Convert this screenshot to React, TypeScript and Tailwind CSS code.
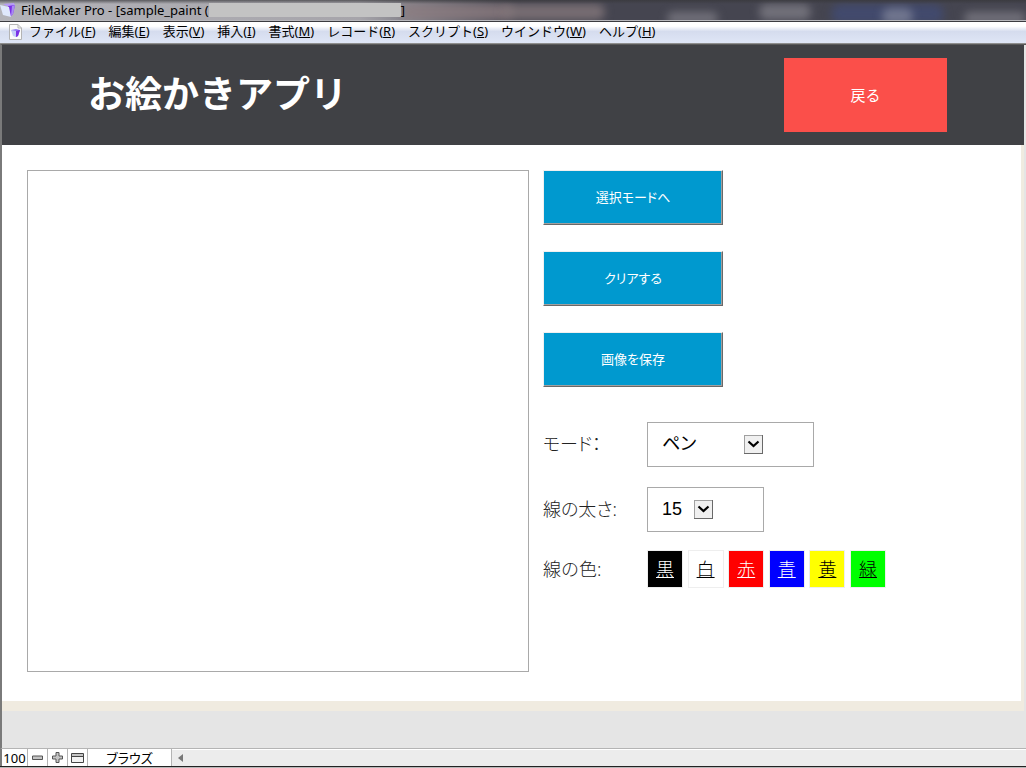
import React from "react";

interface menuType {
  name: string;
  shortcut: string;
}

interface swatchType {
  name: string;
  style: string;
}

const FileMakerIcon = ({ className }: { className: string }) => (
  <svg viewBox="0 0 16 16" className={className} aria-hidden="true">
    <path d="M3 2 L14 1 L15 4 L9 5 Z" fill="#b79cf6" />
    <path d="M8 4 L15 3 L13 12 L10 15 Z" fill="#7a2fe6" />
    <path d="M12 4 L15 3 L13 12 L11 14 Z" fill="#a98af4" />
    <path d="M0 3 L9 5 L11 15 L3 13 Z" fill="#dfe8fc" />
  </svg>
);

const FileIcon = () => (
  <svg viewBox="0 0 13 16" className="h-4 w-[13px]" aria-hidden="true">
    <path d="M0.5 0.5 H9 L12.5 4 V15.5 H0.5 Z" fill="#fafafa" stroke="#b4b4b4" />
    <path d="M9 0.5 V4 H12.5" fill="none" stroke="#b4b4b4" />
    <path d="M2 6 L7 5 L11 6 L9 12 L7 13 Z" fill="#8f7cf2" />
    <path d="M7 7 L11 6 L9 12 L7 13 Z" fill="#7a2fe6" />
    <path d="M2 6 L7 7 V13 L4 12 Z" fill="#c3cdf8" />
  </svg>
);

const TitleBar = () => (
  <div className="relative flex h-[22px] items-start overflow-hidden border-b border-[#3c3c40] bg-linear-to-r from-[#b3b3b9] via-[#a6a4aa] via-35% to-[#454550] to-50% pt-[2px]">
    <div className="absolute top-1 left-[39%] h-4 w-[11%] rounded-full bg-[#8c7c80]/80 blur-[4px]" />
    <div className="absolute top-1 left-[49%] h-4 w-[10%] rounded-full bg-[#85787c]/80 blur-[4px]" />
    <div className="absolute top-3 left-[65%] h-3 w-[5%] rounded-full bg-[#85838c]/70 blur-[4px]" />
    <div className="absolute top-1 left-[74%] h-4 w-[5%] rounded-full bg-[#85838c]/70 blur-[4px]" />
    <div className="absolute top-1 left-[81%] h-5 w-[11%] rounded-full bg-[#414b74]/80 blur-[4px]" />
    <div className="absolute top-2 left-[86%] h-4 w-[3%] rounded-full bg-[#85899c]/70 blur-[4px]" />
    <div className="absolute top-3 left-[94%] h-3 w-[6%] rounded-full bg-[#85838c]/70 blur-[4px]" />
    <div className="absolute inset-x-0 top-0 h-1 bg-linear-to-b from-[#37373a]/70 to-transparent" />
    <div className="absolute inset-x-0 bottom-0 h-px bg-[#b8b8bc]" />
    <div className="relative flex items-center text-[13px] leading-4 text-black">
      <FileMakerIcon className="mr-[5px] h-4 w-4" />
      <span className="whitespace-pre">FileMaker Pro - [sample_paint (</span>
      <span className="h-[14px] w-[192px] bg-[#c3c3c3]" />
      <span>]</span>
    </div>
  </div>
);

const MenuBar = () => {
  const menus: menuType[] = [
    { name: "ファイル", shortcut: "F" },
    { name: "編集", shortcut: "E" },
    { name: "表示", shortcut: "V" },
    { name: "挿入", shortcut: "I" },
    { name: "書式", shortcut: "M" },
    { name: "レコード", shortcut: "R" },
    { name: "スクリプト", shortcut: "S" },
    { name: "ウインドウ", shortcut: "W" },
    { name: "ヘルプ", shortcut: "H" },
  ];
  return (
    <nav className="flex h-[22px] items-center gap-[13px] border-b border-[#8e8e8e] bg-linear-to-b from-white from-20% via-[#d5dcee] via-45% to-[#dfe6f6] pb-[3px] pl-[9px]">
      <div className="-mr-[6px] pt-[2px]">
        <FileIcon />
      </div>
      {menus.map((menu) => (
        <button
          key={menu.name}
          type="button"
          className="text-[13px] leading-4 whitespace-nowrap text-black"
        >
          {menu.name}(<u>{menu.shortcut}</u>)
        </button>
      ))}
    </nav>
  );
};

const ActionButton = ({ name }: { name: string }) => (
  <button
    type="button"
    className="h-[55px] w-[180px] border border-t-[#f0f0f0] border-r-[#696969] border-b-[#696969] border-l-[#f0f0f0] bg-[#0099cf] pt-px text-[13px] text-white shadow-[inset_-1px_-1px_0_#a0a0a0] [font-feature-settings:'palt']"
  >
    {name}
  </button>
);

interface selectProps {
  id: string;
  width: string;
  options: string[];
}

const SelectBox = ({ id, width, options }: selectProps) => (
  <div
    className={`relative flex h-[45px] items-center border border-[#a9a9a9] pr-[50px] ${width}`}
  >
    <select
      id={id}
      className="h-full w-full appearance-none bg-transparent pb-[2px] pl-[14px] font-['Liberation_Sans','Noto_Sans_CJK_JP',sans-serif] text-lg font-normal text-black [font-feature-settings:'palt']"
    >
      {options.map((option) => (
        <option key={option}>{option}</option>
      ))}
    </select>
    <svg
      viewBox="0 0 19 19"
      className="pointer-events-none absolute right-[50px] h-[19px] w-[19px]"
      aria-hidden="true"
    >
      <path d="M0 0 H19 V19 H0 Z" fill="#696969" />
      <path d="M0 0 H18 V18 H0 Z" fill="#a0a0a0" />
      <path d="M1 1 H18 V18 H1 Z" fill="#f0f0f0" />
      <path d="M4.5 6.5 L9.5 11 L14.5 6.5" fill="none" stroke="#000" strokeWidth="2.2" />
    </svg>
  </div>
);

const Settings = () => {
  const swatches: swatchType[] = [
    { name: "黒", style: "bg-black text-white" },
    { name: "白", style: "bg-white text-black" },
    { name: "赤", style: "bg-[#ff0000] text-white" },
    { name: "青", style: "bg-[#0000ff] text-white" },
    { name: "黄", style: "bg-[#ffff00] text-black" },
    { name: "緑", style: "bg-[#00ff00] text-black" },
  ];
  return (
    <div className="mt-[35px] text-lg font-light text-[#222222]">
      <div className="flex items-center">
        <label htmlFor="mode" className="w-[104px] pb-[2px] [font-feature-settings:'palt']">
          モード：
        </label>
        <SelectBox id="mode" width="w-[167px]" options={["ペン", "消しゴム"]} />
      </div>
      <div className="mt-5 flex items-center">
        <label htmlFor="thickness" className="w-[104px] pb-[2px] [font-feature-settings:'palt']">
          線の太さ:
        </label>
        <SelectBox id="thickness" width="w-[117px]" options={["15", "5", "10", "20"]} />
      </div>
      <div className="mt-[18px] flex items-center">
        <span className="w-[104px]">線の色:</span>
        <div className="flex w-[239px] justify-between">
          {swatches.map((swatch) => (
            <a
              key={swatch.name}
              href="#"
              className={`flex h-[38px] w-[36px] items-center justify-center border border-[#eeeeee] underline ${swatch.style}`}
            >
              {swatch.name}
            </a>
          ))}
        </div>
      </div>
    </div>
  );
};

const StatusBar = () => (
  <footer className="flex h-[18px] items-stretch border-t border-l-2 border-t-[#b4b4b4] border-l-[#7a7a7a] bg-[#ececec] text-[13px] leading-4 text-black">
    <div className="flex w-[25px] items-center justify-center bg-white">100</div>
    <button
      type="button"
      aria-label="縮小"
      className="flex w-5 items-center justify-center border-l border-[#b4b4b4] bg-white"
    >
      <svg viewBox="0 0 11 11" className="h-[11px] w-[11px]">
        <path d="M0.5 4 H10.5 V7.5 H0.5 Z" fill="#c4c4c4" stroke="#555" />
      </svg>
    </button>
    <button
      type="button"
      aria-label="拡大"
      className="flex w-5 items-center justify-center border-l border-[#b4b4b4] bg-white"
    >
      <svg viewBox="0 0 11 11" className="h-[11px] w-[11px]">
        <path
          d="M4 0.5 H7 V4 H10.5 V7 H7 V10.5 H4 V7 H0.5 V4 H4 Z"
          fill="#c4c4c4"
          stroke="#555"
        />
      </svg>
    </button>
    <button
      type="button"
      aria-label="ステータスツールバー"
      className="flex w-5 items-center justify-center border-l border-[#b4b4b4] bg-white"
    >
      <svg viewBox="0 0 13 10" className="h-[10px] w-[13px]">
        <path d="M0.5 0.5 H12.5 V9.5 H0.5 Z" fill="#f2f2f2" stroke="#444" />
        <path d="M1 1 H12 V3 H1 Z" fill="#c4c4c4" />
        <path d="M1 3.5 H12" stroke="#444" />
      </svg>
    </button>
    <button
      type="button"
      className="w-[85px] border-x border-[#b4b4b4] bg-white text-center [font-feature-settings:'palt']"
    >
      ブラウズ
    </button>
    <div className="flex flex-1 items-center border-t border-white pl-[6px]">
      <svg viewBox="0 0 5 8" className="h-2 w-[5px]" aria-hidden="true">
        <path d="M5 0 V8 L0 4 Z" fill="#777" />
      </svg>
    </div>
  </footer>
);

const App = () => {
  return (
    <div className="flex min-h-screen flex-col bg-[#e5e5e5] font-['Noto_Sans','Noto_Sans_CJK_JP',sans-serif]">
      <TitleBar />
      <MenuBar />
      <main className="flex flex-1 flex-col border-t border-l-2 border-t-[#5a5a5a] border-l-[#7a7a7a] pr-[2px]">
        <header className="flex h-[100px] items-center justify-between bg-[#404145] pr-[77px] pl-[86px]">
          <h1 className="pb-[2px] text-[37px] leading-10 font-bold text-white">
            お絵かきアプリ
          </h1>
          <button
            type="button"
            className="h-[74px] w-[163px] bg-[#fb4f4a] text-[15px] text-white"
          >
            戻る
          </button>
        </header>
        <div className="border-r-[3px] border-b-[10px] border-[#f0ebe0] bg-white">
          <div className="flex gap-[14px] pt-[25px] pb-[29px] pl-[25px]">
            <canvas className="h-[502px] w-[502px] shrink-0 border border-[#a9a9a9]" />
            <div>
              <div className="flex flex-col gap-[26px]">
                <ActionButton name="選択モードへ" />
                <ActionButton name="クリアする" />
                <ActionButton name="画像を保存" />
              </div>
              <Settings />
            </div>
          </div>
        </div>
      </main>
      <StatusBar />
      <div className="h-[2px] border-t border-[#222222] bg-[#b8b8b8]" />
    </div>
  );
};

export default App;
